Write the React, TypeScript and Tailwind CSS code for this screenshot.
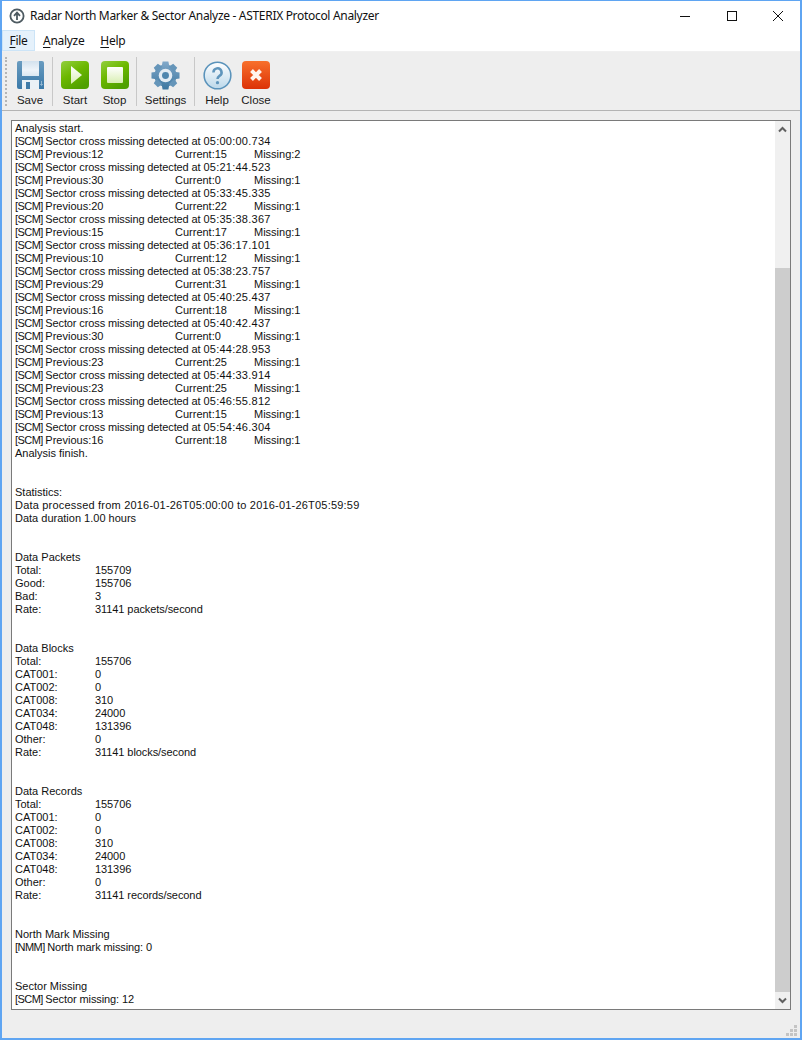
const titleFont = { fontFamily: '"Noto Sans", "Open Sans", sans-serif' };
const logFont = { fontFamily: '"Liberation Sans", Arial, sans-serif' };

const scm: [string, string, string, string][] = [
  ["05:00:00.734", "12", "15", "2"],
  ["05:21:44.523", "30", "0", "1"],
  ["05:33:45.335", "20", "22", "1"],
  ["05:35:38.367", "15", "17", "1"],
  ["05:36:17.101", "10", "12", "1"],
  ["05:38:23.757", "29", "31", "1"],
  ["05:40:25.437", "16", "18", "1"],
  ["05:40:42.437", "30", "0", "1"],
  ["05:44:28.953", "23", "25", "1"],
  ["05:44:33.914", "23", "25", "1"],
  ["05:46:55.812", "13", "15", "1"],
  ["05:54:46.304", "16", "18", "1"],
];

function Line({ children }: { children?: React.ReactNode }) {
  return <div className="h-[13px] leading-[13px] whitespace-pre">{children}</div>;
}

function Tag({ name }: { name: string }) {
  return <span className="tracking-[-0.55px]">[{name}] </span>;
}

function ScmRow({ prev, cur, miss }: { prev: string; cur: string; miss: string }) {
  return (
    <div className="flex h-[13px] leading-[13px] whitespace-pre">
      <span className="w-[160px]"><Tag name="SCM" />Previous:{prev}</span>
      <span className="w-[79px]">Current:{cur}</span>
      <span>Missing:{miss}</span>
    </div>
  );
}

function Stat({ label, value }: { label: string; value: string }) {
  return (
    <div className="flex h-[13px] leading-[13px] whitespace-pre">
      <span className="w-[80px]">{label}</span>
      <span className="tracking-[-0.08px]">{value}</span>
    </div>
  );
}

function Gap() {
  return (
    <>
      <Line />
      <Line />
    </>
  );
}

function ToolButton({ label, width, children }: { label: string; width: string; children: React.ReactNode }) {
  return (
    <div className={`flex flex-col items-center ${width}`}>
      <div className="h-[30px] w-[30px] flex items-center justify-center">{children}</div>
      <span className="text-[11.5px] leading-[15px] mt-[3px] text-[#1a1a1a]" style={logFont}>{label}</span>
    </div>
  );
}

function Sep() {
  return <div className="w-px h-[49px] bg-[#c8c8c8] mt-[5px]" />;
}

function SaveIcon() {
  return (
    <svg width="27" height="28" viewBox="0 0 27 28">
      <defs>
        <linearGradient id="sv" x1="0" y1="0" x2="0" y2="1">
          <stop offset="0" stopColor="#6a9cc0" />
          <stop offset="1" stopColor="#3a79a8" />
        </linearGradient>
        <linearGradient id="svp" x1="0" y1="0" x2="0" y2="1">
          <stop offset="0" stopColor="#d3e2ee" />
          <stop offset="0.6" stopColor="#eef4f9" />
          <stop offset="1" stopColor="#dbe8f1" />
        </linearGradient>
      </defs>
      <path d="M2 0h23a2 2 0 0 1 2 2v26H2a2 2 0 0 1-2-2V2a2 2 0 0 1 2-2z" fill="url(#sv)" />
      <rect x="5" y="0" width="17" height="15" fill="url(#svp)" />
      <rect x="5" y="19" width="17" height="9" fill="#eaf1f6" />
      <rect x="9" y="21" width="4" height="7" fill="#3f7ba8" />
      <path d="M24.5 20v4M23.2 23l1.3 1.5 1.3-1.5" stroke="#a6c3d8" fill="none" strokeWidth="0.8" />
    </svg>
  );
}

function StartIcon() {
  return (
    <svg width="28" height="28" viewBox="0 0 28 28">
      <defs>
        <linearGradient id="st" x1="0" y1="0" x2="0.6" y2="1">
          <stop offset="0" stopColor="#93cf3e" />
          <stop offset="0.5" stopColor="#6cb800" />
          <stop offset="1" stopColor="#4fa000" />
        </linearGradient>
        <linearGradient id="stw" x1="0" y1="0" x2="0" y2="1">
          <stop offset="0" stopColor="#ffffff" />
          <stop offset="1" stopColor="#d9efb3" />
        </linearGradient>
      </defs>
      <rect width="28" height="28" rx="4" fill="url(#st)" />
      <path d="M10 5l11 9-11 9z" fill="url(#stw)" />
    </svg>
  );
}

function StopIcon() {
  return (
    <svg width="28" height="28" viewBox="0 0 28 28">
      <defs>
        <linearGradient id="sp" x1="0" y1="0" x2="0.6" y2="1">
          <stop offset="0" stopColor="#93cf3e" />
          <stop offset="0.5" stopColor="#6cb800" />
          <stop offset="1" stopColor="#4fa000" />
        </linearGradient>
        <linearGradient id="spw" x1="0" y1="0" x2="0" y2="1">
          <stop offset="0" stopColor="#ffffff" />
          <stop offset="1" stopColor="#d9efb3" />
        </linearGradient>
      </defs>
      <rect width="28" height="28" rx="4" fill="url(#sp)" />
      <rect x="6" y="6" width="16" height="16" rx="1" fill="url(#spw)" />
    </svg>
  );
}

function GearIcon() {
  const teeth = [45, 135, 225, 315];
  return (
    <svg width="29" height="29" viewBox="0 0 30 30">
      <defs>
        <linearGradient id="gr" gradientUnits="userSpaceOnUse" x1="0" y1="0" x2="0" y2="30">
          <stop offset="0" stopColor="#82a9ca" />
          <stop offset="1" stopColor="#3c769f" />
        </linearGradient>
      </defs>
      <g fill="url(#gr)">
        <circle cx="15" cy="15" r="11.5" />
        <path d="M12 0.5h6l1 5.5h-8zM12 29.5h6l1-5.5h-8zM0.5 12v6l5.5 1v-8zM29.5 12v6l-5.5 1v-8z" />
      </g>
      {teeth.map((a) => (
        <path key={a} d="M12 0.8h6l1 5.5h-8z" fill="#6595b9" transform={`rotate(${a} 15 15)`} />
      ))}
      <circle cx="15" cy="15" r="7" fill="#e4ecf3" />
      <circle cx="15" cy="15" r="3.6" fill="#4f86ae" />
    </svg>
  );
}

function HelpIcon() {
  return (
    <svg width="29" height="29" viewBox="0 0 30 30">
      <defs>
        <linearGradient id="hp" x1="0" y1="0" x2="0" y2="1">
          <stop offset="0" stopColor="#ffffff" />
          <stop offset="1" stopColor="#bcd8ea" />
        </linearGradient>
      </defs>
      <circle cx="15" cy="15" r="13.8" fill="url(#hp)" stroke="#5a93bb" strokeWidth="1.6" />
      <path d="M10.8 11.8a4.2 4.2 0 1 1 6.3 3.6c-1.4.9-2.1 1.6-2.1 3.2" fill="none" stroke="#5f95bc" strokeWidth="2.6" />
      <circle cx="15" cy="22.4" r="1.7" fill="#5f95bc" />
    </svg>
  );
}

function CloseIcon() {
  return (
    <svg width="28" height="28" viewBox="0 0 28 28">
      <defs>
        <linearGradient id="cl" x1="0" y1="0" x2="0" y2="1">
          <stop offset="0" stopColor="#f8702c" />
          <stop offset="1" stopColor="#dc3206" />
        </linearGradient>
      </defs>
      <rect width="28" height="28" rx="4" fill="url(#cl)" />
      <path d="M9.5 9.5l9 9M18.5 9.5l-9 9" stroke="#fff4ee" strokeWidth="4" />
    </svg>
  );
}

export default function App() {
  return (
    <div
      className="w-[802px] h-[1040px] flex flex-col bg-[#eeeeee] border-x-2 border-b-2 border-[#5fa5f2] border-t border-t-[#5fa5f2] overflow-hidden text-[12px] text-[#111]"
      style={titleFont}
    >
      {/* title bar */}
      <div className="h-[29px] bg-white flex items-center shrink-0">
        <svg width="16" height="16" viewBox="0 0 16 16" className="ml-[7px]">
          <circle cx="8" cy="8" r="6.6" fill="none" stroke="#4d5a61" strokeWidth="1.8" />
          <path d="M8 12V5M5 7.8L8 4.6l3 3.2" fill="none" stroke="#4d5a61" strokeWidth="1.8" />
        </svg>
        <span className="ml-[5px] text-[12px] tracking-[-0.31px] text-[#111]">Radar North Marker &amp; Sector Analyze - ASTERIX Protocol Analyzer</span>
        <div className="ml-auto flex items-center">
          <svg width="12" height="12" viewBox="0 0 12 12" className="mr-[35px]">
            <path d="M1 6.5h10" stroke="#111" strokeWidth="1" />
          </svg>
          <svg width="12" height="12" viewBox="0 0 12 12" className="mr-[34px]">
            <rect x="1.5" y="1.5" width="9" height="9" fill="none" stroke="#111" strokeWidth="1" />
          </svg>
          <svg width="12" height="12" viewBox="0 0 12 12" className="mr-[16px]">
            <path d="M1 1l10 10M11 1L1 11" stroke="#111" strokeWidth="1" />
          </svg>
        </div>
      </div>

      {/* menu */}
      <div className="h-[22px] bg-white flex items-stretch shrink-0 border-b border-[#f0f0f0] text-[12px] tracking-[-0.3px]">
        <span className="w-[33px] flex items-center justify-center bg-[#e5f1fb] border border-[#cce4f7]">
          <span className="underline underline-offset-2 decoration-1">F</span>ile
        </span>
        <span className="ml-[8px] flex items-center">
          <span className="underline underline-offset-2 decoration-1">A</span>nalyze
        </span>
        <span className="ml-[16px] flex items-center">
          <span className="underline underline-offset-2 decoration-1">H</span>elp
        </span>
      </div>

      {/* toolbar */}
      <div className="h-[59px] flex items-start shrink-0 border-b border-[#b4b4b4] bg-[#eeeeee] pl-[3px]">
        <div className="w-[3px] h-[49px] mt-[5px] border-l-2 border-dotted border-[#b5b5b5]" />
        <div className="flex items-start pt-[8px]">
          <ToolButton label="Save" width="w-[44px]"><SaveIcon /></ToolButton>
        </div>
        <Sep />
        <div className="flex items-start pt-[8px] pl-[2px] pr-[2px]">
          <ToolButton label="Start" width="w-[40px]"><StartIcon /></ToolButton>
          <ToolButton label="Stop" width="w-[39px]"><StopIcon /></ToolButton>
        </div>
        <Sep />
        <div className="flex items-start pt-[8px]">
          <ToolButton label="Settings" width="w-[57px]"><GearIcon /></ToolButton>
        </div>
        <Sep />
        <div className="flex items-start pt-[8px] pl-[2px]">
          <ToolButton label="Help" width="w-[40px]"><HelpIcon /></ToolButton>
          <ToolButton label="Close" width="w-[38px]"><CloseIcon /></ToolButton>
        </div>
      </div>

      {/* log box */}
      <div className="flex-1 min-h-0 pt-[9px] pl-[9px] pr-[9px] pb-[9px] text-[11px]" style={logFont}>
        <div className="h-[890px] flex border border-[#7a7a7a] bg-white">
          <div className="flex-1 pl-[3px] pt-[1px] overflow-hidden">
            <Line>Analysis start.</Line>
            {scm.map(([t, p, c, m]) => (
              <div key={t}>
                <Line>
                  <Tag name="SCM" />
                  <span className="tracking-[-0.12px]">Sector cross missing detected at </span>
                  <span className="tracking-[0.25px]">{t}</span>
                </Line>
                <ScmRow prev={p} cur={c} miss={m} />
              </div>
            ))}
            <Line>Analysis finish.</Line>
            <Gap />
            <Line>Statistics:</Line>
            <Line><span className="tracking-[0.2px]">Data processed from 2016-01-26T05:00:00 to 2016-01-26T05:59:59</span></Line>
            <Line>Data duration 1.00 hours</Line>
            <Gap />
            <Line>Data Packets</Line>
            <Stat label="Total:" value="155709" />
            <Stat label="Good:" value="155706" />
            <Stat label="Bad:" value="3" />
            <Stat label="Rate:" value="31141 packets/second" />
            <Gap />
            <Line>Data Blocks</Line>
            <Stat label="Total:" value="155706" />
            <Stat label="CAT001:" value="0" />
            <Stat label="CAT002:" value="0" />
            <Stat label="CAT008:" value="310" />
            <Stat label="CAT034:" value="24000" />
            <Stat label="CAT048:" value="131396" />
            <Stat label="Other:" value="0" />
            <Stat label="Rate:" value="31141 blocks/second" />
            <Gap />
            <Line>Data Records</Line>
            <Stat label="Total:" value="155706" />
            <Stat label="CAT001:" value="0" />
            <Stat label="CAT002:" value="0" />
            <Stat label="CAT008:" value="310" />
            <Stat label="CAT034:" value="24000" />
            <Stat label="CAT048:" value="131396" />
            <Stat label="Other:" value="0" />
            <Stat label="Rate:" value="31141 records/second" />
            <Gap />
            <Line>North Mark Missing</Line>
            <Line><Tag name="NMM" /><span className="tracking-[-0.1px]">North mark missing: 0</span></Line>
            <Gap />
            <Line>Sector Missing</Line>
            <Line><Tag name="SCM" /><span className="tracking-[-0.1px]">Sector missing: 12</span></Line>
          </div>
          {/* scrollbar */}
          <div className="w-[15px] flex flex-col bg-[#f0f0f0]">
            <div className="h-[17px] flex items-center justify-center">
              <svg width="9" height="7" viewBox="0 0 9 7">
                <path d="M1 5.5l3.5-3.5 3.5 3.5" fill="none" stroke="#606060" strokeWidth="2" />
              </svg>
            </div>
            <div className="h-[130px]" />
            <div className="flex-1 bg-[#cdcdcd]" />
            <div className="h-[17px] flex items-center justify-center">
              <svg width="9" height="7" viewBox="0 0 9 7">
                <path d="M1 1.5l3.5 3.5 3.5-3.5" fill="none" stroke="#606060" strokeWidth="2" />
              </svg>
            </div>
          </div>
        </div>
        <div className="flex justify-end mt-[15px] mr-[-7px]">
          <svg width="12" height="12" viewBox="0 0 12 12" fill="#c4c4c4">
            <rect x="8" y="0" width="3" height="3" />
            <rect x="4" y="4" width="3" height="3" />
            <rect x="8" y="4" width="3" height="3" />
            <rect x="0" y="8" width="3" height="3" />
            <rect x="4" y="8" width="3" height="3" />
            <rect x="8" y="8" width="3" height="3" />
          </svg>
        </div>
      </div>
    </div>
  );
}
